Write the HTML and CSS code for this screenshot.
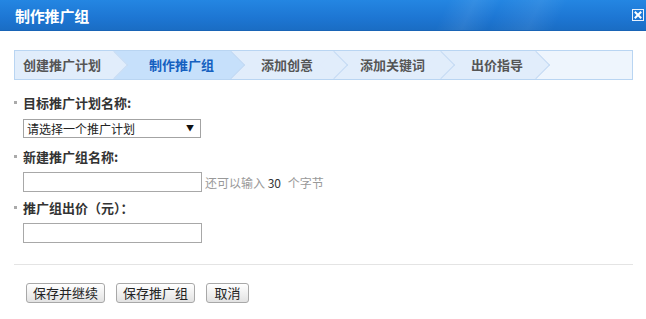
FILE: index.html
```html
<!DOCTYPE html>
<html lang="zh-CN">
<head>
<meta charset="utf-8">
<title>制作推广组</title>
<link rel="stylesheet" href="styles.css">
</head>
<body>
<div class="dialog">
  <div class="titlebar">
    <span class="title">制作推广组</span>
    <span class="close" title="关闭">
      <svg width="12" height="12" viewBox="0 0 12 12">
        <rect x="0.5" y="0.5" width="11" height="11" fill="none" stroke="#e8f1fc" stroke-width="1"/>
        <path d="M3.5 3.5 L8.5 8.5 M8.5 3.5 L3.5 8.5" stroke="#ffffff" stroke-width="2" stroke-linecap="square"/>
      </svg>
    </span>
  </div>
  <div class="content">
    <div class="steps">
      <div class="step s1"><span class="step-text">创建推广计划</span></div>
      <div class="step s2 active"><span class="step-text">制作推广组</span></div>
      <div class="step s3"><span class="step-text">添加创意</span></div>
      <div class="step s4"><span class="step-text">添加关键词</span></div>
      <div class="step s5"><span class="step-text">出价指导</span></div>
    </div>
    <div class="form">
      <div class="label"><i class="dot"></i>目标推广计划名称:</div>
      <div class="control control-select">
        <span class="select-wrap">
          <select class="select">
            <option>请选择一个推广计划</option>
          </select>
        </span>
      </div>
      <div class="label"><i class="dot"></i>新建推广组名称:</div>
      <div class="control">
        <input class="text" type="text">
        <span class="hint">还可以输入 <b class="num">30</b> 个字节</span>
      </div>
      <div class="label"><i class="dot"></i>推广组出价（元）：</div>
      <div class="control">
        <input class="text" type="text">
      </div>
    </div>
    <div class="sep"></div>
    <div class="buttons">
      <button class="btn" type="button">保存并继续</button>
      <button class="btn" type="button">保存推广组</button>
      <button class="btn" type="button">取消</button>
    </div>
  </div>
</div>
</body>
</html>
```

FILE: styles.css
```css
html, body {
  margin: 0;
  padding: 0;
  background: #ffffff;
}
body {
  font-family: "Noto Sans CJK SC", "Liberation Sans", sans-serif;
  font-size: 13px;
  color: #333;
}
.dialog {
  width: 646px;
  height: 319px;
  overflow: hidden;
}
.titlebar {
  height: 31px;
  display: flex;
  align-items: center;
  justify-content: space-between;
  padding: 0 2px 0 15px;
  background:
    linear-gradient(115deg, rgba(255,255,255,0) 68%, rgba(255,255,255,0.08) 72%, rgba(255,255,255,0) 76%, rgba(255,255,255,0.07) 82%, rgba(255,255,255,0) 86%),
    linear-gradient(#2486e2, #1d76d3 60%, #1a6dc4);
  border-bottom: 1px solid #1864b6;
  box-sizing: border-box;
}
.title {
  color: #fff;
  font-size: 15px;
  font-weight: bold;
  line-height: 31px;
  letter-spacing: -0.2px;
}
.close {
  display: flex;
  width: 12px;
  height: 12px;
  margin-top: -1px;
}
.content {
  padding: 19px 13px 0 14px;
}
.steps {
  display: flex;
  height: 28px;
  border: 1px solid #b9d5f2;
  background: #eef5fd;
  overflow: hidden;
}
.step {
  position: relative;
  height: 28px;
  line-height: 28px;
  background: #e1edfb;
  color: #555;
  font-weight: bold;
  font-size: 13px;
  text-align: left;
  box-sizing: border-box;
  flex: none;
  white-space: nowrap;
}
.step-text {
  position: relative;
  z-index: 2;
}
.step::after {
  content: "";
  position: absolute;
  z-index: 1;
  right: -10px;
  top: 4px;
  width: 20px;
  height: 20px;
  box-sizing: border-box;
  background: inherit;
  border-top: 1px solid #c3daf3;
  border-right: 1px solid #c3daf3;
  transform: rotate(45deg);
}
.step.active {
  background: #c6e0fb;
  color: #1560c0;
}
.s1 { width: 99px; padding-left: 8px; }
.s2 { width: 117px; padding-left: 35px; }
.s3 { width: 103px; padding-left: 30px; }
.s4 { width: 107px; padding-left: 26px; }
.s5 { width: 95px; padding-left: 30px; }

.form {
  padding-top: 12px;
}
.label {
  display: flex;
  align-items: center;
  height: 20px;
  font-weight: bold;
  color: #333;
  font-size: 13px;
}
.dot {
  width: 3px;
  height: 3px;
  background: #aaa;
  margin: 0 6px 0 0;
  flex: none;
}
.control {
  display: flex;
  align-items: center;
  padding-left: 9px;
  height: 20px;
  margin: 6px 0 5px;
}
.control-select {
  height: 19px;
  margin: 7px 0 8px;
}
.select-wrap {
  position: relative;
  display: inline-block;
  height: 19px;
}
.select-wrap::after {
  content: "▼";
  position: absolute;
  right: 7px;
  top: 4px;
  font-size: 8px;
  line-height: 10px;
  color: #111;
  pointer-events: none;
}
.select {
  display: block;
  appearance: none;
  -webkit-appearance: none;
  width: 178px;
  height: 19px;
  margin: 0;
  padding: 0 0 0 3px;
  border: 1px solid #a3a3a3;
  border-radius: 0;
  background: #fff;
  font-family: "Noto Sans CJK SC", sans-serif;
  font-size: 12px;
  line-height: 17px;
  color: #222;
  box-sizing: border-box;
}
.text {
  width: 179px;
  height: 20px;
  margin: 0;
  padding: 0 3px;
  border: 1px solid #a8a8a8;
  box-sizing: border-box;
  font-size: 12px;
  outline: none;
}
.hint {
  margin-left: 3px;
  color: #999;
  font-size: 12px;
  white-space: pre;
}
.num {
  font-weight: normal;
  color: #333;
  margin-right: 4px;
}
.sep {
  height: 1px;
  background: #e4e4e4;
  margin-top: 21px;
}
.buttons {
  display: flex;
  gap: 11px;
  padding: 18px 0 0 12px;
}
.btn {
  height: 20px;
  min-width: 43px;
  padding: 0 6px;
  margin: 0;
  border: 1px solid #a8a8a8;
  border-radius: 3px;
  background: linear-gradient(#ffffff, #f1f1f1 50%, #e2e2e2);
  font-family: "Noto Sans CJK SC", sans-serif;
  font-size: 13px;
  line-height: 18px;
  color: #222;
  box-sizing: border-box;
}
```
